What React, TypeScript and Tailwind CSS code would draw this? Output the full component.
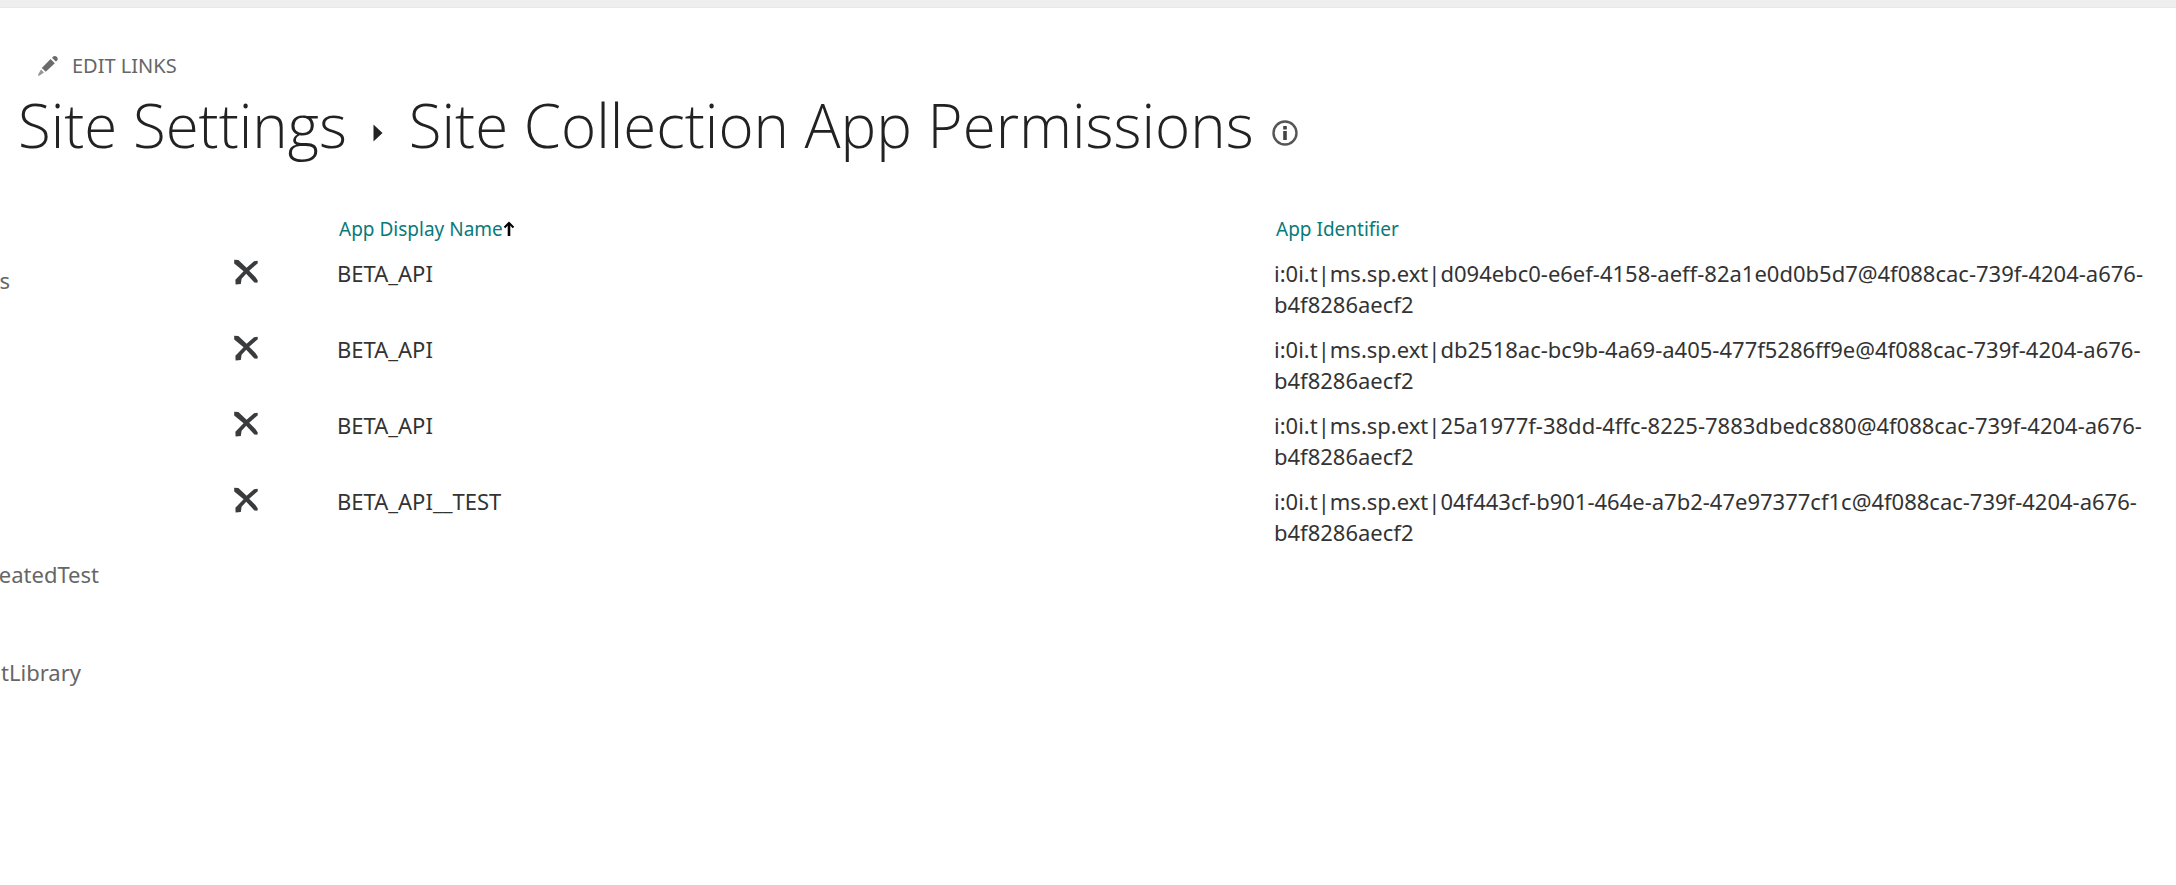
const apps = [
  { name: 'BETA_API', id: 'i:0i.t|ms.sp.ext|d094ebc0-e6ef-4158-aeff-82a1e0d0b5d7@4f088cac-739f-4204-a676-b4f8286aecf2' },
  { name: 'BETA_API', id: 'i:0i.t|ms.sp.ext|db2518ac-bc9b-4a69-a405-477f5286ff9e@4f088cac-739f-4204-a676-b4f8286aecf2' },
  { name: 'BETA_API', id: 'i:0i.t|ms.sp.ext|25a1977f-38dd-4ffc-8225-7883dbedc880@4f088cac-739f-4204-a676-b4f8286aecf2' },
  { name: 'BETA_API__TEST', id: 'i:0i.t|ms.sp.ext|04f443cf-b901-464e-a7b2-47e97377cf1c@4f088cac-739f-4204-a676-b4f8286aecf2' },
];

function PencilIcon() {
  return (
    <svg viewBox="0 0 22 22" className="size-[22px]" fill="#6b6b6b" aria-hidden="true">
      <path d="M15.4 2.2 Q17.8 0 20 2 Q21.8 4 20 5.8 L18.8 6.4 L15.2 3Z" />
      <path d="M13.6 4 L17.8 8.2 L8.8 16.8 L4.8 13Z" />
      <path d="M4 14.4 L7 17.4 L2.6 20.4 L1 21 L1.4 19Z" opacity="0.7" />
    </svg>
  );
}

function DeleteIcon() {
  return (
    <svg viewBox="0 0 26 26" className="size-[26px]" fill="#3a3b3d" aria-hidden="true">
      <path d="M1.2 0.8 L5.4 1 L13.6 8.8 L21 2.2 L24.6 1.8 L24.8 4.2 L16.2 11.8 L22.4 18 L24.8 21.4 L24.4 23.8 L21.4 23.4 L13.2 14.8 L8.6 19.8 L7.8 25 L2.6 25.4 L2.4 20.8 L10.6 12.2 L1.2 4.6Z" />
    </svg>
  );
}

export default function App() {
  return (
    <div className="min-h-screen overflow-hidden bg-white font-['Noto_Sans','Open_Sans',sans-serif] text-[#333333]">
      <div className="h-2 border-b border-[#e8e8e8] bg-[#eeeeee]" />
      <header className="pt-[43px]">
        <button className="flex h-[30px] items-center gap-[13px] pl-[37px] text-xl text-[#666666]">
          <PencilIcon />
          EDIT LINKS
        </button>
        <h1 className="flex h-[88px] items-center pl-[18px] font-['Open_Sans','Noto_Sans',sans-serif] text-6xl font-light whitespace-nowrap text-[#222222]">
          <a href="#settings">Site Settings</a>
          <svg viewBox="0 0 10 18" className="mt-4 mr-[26px] ml-[26px] h-[18px] w-[10px]" fill="#222222" aria-hidden="true">
            <path d="M0.5 0.5 L9.5 9 L0.5 17.5Z" />
          </svg>
          Site Collection App Permissions
          <svg viewBox="0 0 26 26" className="mt-4 ml-[18px] size-[26px]" fill="none" stroke="#555555" aria-hidden="true">
            <circle cx="13" cy="13" r="11.5" strokeWidth="2.4" />
            <path d="M13 6V9.4M13 11V20" strokeWidth="3.6" stroke="#444444" />
          </svg>
        </h1>
      </header>
      <div className="flex pt-[41px]">
        <nav className="flex w-[220px] shrink-0 flex-col pt-[53px] text-[22px] leading-[34px] text-[#666666]">
          <a href="#1" className="flex w-[10px] justify-end overflow-hidden">s</a>
          <a href="#2" className="mt-[260px] flex w-[99px] justify-end overflow-hidden">reatedTest</a>
          <a href="#3" className="mt-[64px] flex w-[81px] justify-end overflow-hidden">ntLibrary</a>
        </nav>
        <main className="min-w-0 flex-1 pr-6">
          <table className="w-full table-fixed text-left">
            <thead className="text-[19px] leading-[30px] text-[#077a7a]">
              <tr>
                <th className="w-[117px]" aria-label="Delete" />
                <th className="w-[937px] pt-1 pb-[7px] font-normal">
                  <a href="#name" className="inline-flex items-center pl-[2px]">
                    App Display Name
                    <svg viewBox="0 0 12 16" className="h-4 w-3" fill="none" stroke="#000000" aria-hidden="true">
                      <path d="M6 15V2" strokeWidth="2.6" />
                      <path d="M1.5 6.5 L6 2 L10.5 6.5" strokeWidth="2" />
                    </svg>
                  </a>
                </th>
                <th className="pt-1 pb-[7px] font-normal">
                  <a href="#id" className="pl-[2px]">App Identifier</a>
                </th>
              </tr>
            </thead>
            <tbody className="text-[22px] leading-[31px]">
              {apps.map((app) => (
                <tr key={app.id} className="align-top">
                  <td className="pt-2 pl-[13px]">
                    <button aria-label="Delete" className="block">
                      <DeleteIcon />
                    </button>
                  </td>
                  <td className="py-[7px]">{app.name}</td>
                  <td className="py-[7px]">{app.id}</td>
                </tr>
              ))}
            </tbody>
          </table>
        </main>
      </div>
    </div>
  );
}
